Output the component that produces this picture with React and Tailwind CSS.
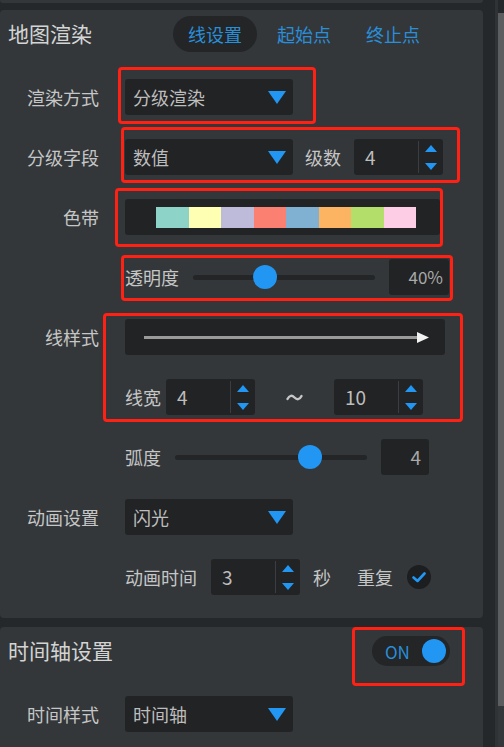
const font = { fontFamily: '"Noto Sans CJK SC", "Noto Sans", sans-serif' };

const Caret = () => (
  <svg width="18" height="13" viewBox="0 0 18 13">
    <polygon points="0,0 18,0 9,13" fill="#2196f3" />
  </svg>
);

const Select = ({ value }) => (
  <div className="w-[168px] h-[36px] bg-[#222325] rounded-[3px] flex items-center justify-between pl-[8px] pr-[7px]">
    <span className="text-[18px] text-[#bdbdbd] leading-none">{value}</span>
    <Caret />
  </div>
);

const NumberInput = ({ value }) => (
  <div className="w-[89px] h-[36px] bg-[#222325] rounded-[3px] flex">
    <div className="flex-1 flex items-center pl-[11px] text-[19px] text-[#bdbdbd]">{value}</div>
    <div className="w-px bg-[#3b3e41] my-[2px]" />
    <div className="w-[24px] flex flex-col items-center justify-between pt-[6px] pb-[5px]">
      <svg width="12" height="7" viewBox="0 0 12 7">
        <polygon points="0,7 12,7 6,0" fill="#2196f3" />
      </svg>
      <svg width="12" height="7" viewBox="0 0 12 7">
        <polygon points="0,0 12,0 6,7" fill="#2196f3" />
      </svg>
    </div>
  </div>
);

const Slider = ({ width, knob }) => (
  <div className="relative h-[5px] bg-[#232527] rounded-full" style={{ width }}>
    <div
      className="absolute top-1/2 w-[24px] h-[24px] -mt-[12px] -ml-[12px] rounded-full bg-[#2196f3]"
      style={{ left: knob }}
    />
  </div>
);

const Label = ({ children }) => (
  <div className="w-[99px] text-right text-[18px] text-[#c6c6c6] leading-none">{children}</div>
);

const RedBox = ({ className }) => (
  <div className={`absolute border-[3px] border-[#ff2114] rounded-[4px] pointer-events-none ${className}`} />
);

const colors = ['#8dd3c7', '#ffffb3', '#bebada', '#fb8072', '#80b1d3', '#fdb462', '#b3de69', '#fccde5'];

export default function App() {
  return (
    <div className="w-[504px] h-[747px] overflow-hidden bg-[#25282a] flex" style={font}>
      {/* panels */}
      <div className="w-[483px] flex flex-col">
        <div className="h-[3px] bg-[#33373a] rounded-b-[4px]" />

        {/* 地图渲染 */}
        <div className="relative mt-[7px] h-[608px] bg-[#33373a] rounded-[4px] pt-[6px]">
          <div className="flex items-center h-[36px]">
            <div className="w-[173px] pl-[8px] text-[21px] text-[#d4d4d4]">地图渲染</div>
            <div className="flex gap-[5px]">
              <div className="w-[84px] h-[36px] rounded-full bg-[#232527] flex items-center justify-center text-[18px] text-[#2a8ed8]">线设置</div>
              <div className="w-[84px] h-[36px] flex items-center justify-center text-[18px] text-[#2a8ed8]">起始点</div>
              <div className="w-[84px] h-[36px] flex items-center justify-center text-[18px] text-[#2a8ed8]">终止点</div>
            </div>
          </div>

          <div className="mt-[27px] flex flex-col gap-[24px]">
            <div className="flex items-center h-[36px] gap-[26px]">
              <Label>渲染方式</Label>
              <Select value="分级渲染" />
            </div>

            <div className="flex items-center h-[36px] gap-[26px]">
              <Label>分级字段</Label>
              <div className="flex items-center">
                <Select value="数值" />
                <span className="ml-[12px] mr-[13px] text-[18px] text-[#c6c6c6]">级数</span>
                <NumberInput value="4" />
              </div>
            </div>

            <div className="flex items-center h-[36px] gap-[26px]">
              <Label>色带</Label>
              <div className="w-[315px] h-[36px] bg-[#222325] rounded-[3px] flex items-center pl-[31px]">
                {colors.map((c) => (
                  <div key={c} className="w-[32.5px] h-[21px]" style={{ backgroundColor: c }} />
                ))}
              </div>
            </div>

            <div className="flex items-center h-[36px] pl-[125px]">
              <span className="text-[18px] text-[#c6c6c6] w-[68px]">透明度</span>
              <Slider width={182} knob={72} />
              <div className="ml-[14px] w-[60px] h-[36px] bg-[#222325] rounded-[3px] flex items-center justify-end pr-[6px] text-[17px] text-[#a9a9a9]">40%</div>
            </div>

            <div className="flex items-center h-[36px] gap-[26px]">
              <Label>线样式</Label>
              <div className="w-[320px] h-[36px] bg-[#222325] rounded-[3px] flex items-center pl-[19px]">
                <div className="w-[273px] h-[3px] bg-[#9a9a9a]" />
                <svg width="12" height="11" viewBox="0 0 12 11">
                  <polygon points="0,0 12,5.5 0,11" fill="#f2f2f2" />
                </svg>
              </div>
            </div>

            <div className="flex items-center h-[36px] pl-[125px]">
              <span className="text-[18px] text-[#c6c6c6] w-[41px]">线宽</span>
              <NumberInput value="4" />
              <div className="w-[79px] flex justify-center">
                <svg width="17" height="7" viewBox="0 0 17 7">
                  <path d="M1.5 5 C3.5 1 6 1 8.5 3.5 C11 6 13.5 6 15.5 2" fill="none" stroke="#c6c6c6" strokeWidth="2.4" strokeLinecap="round" />
                </svg>
              </div>
              <NumberInput value="10" />
            </div>

            <div className="flex items-center h-[36px] pl-[125px]">
              <span className="text-[18px] text-[#c6c6c6] w-[50px]">弧度</span>
              <Slider width={192} knob={135} />
              <div className="ml-[14px] w-[48px] h-[36px] bg-[#222325] rounded-[3px] flex items-center justify-end pr-[8px] text-[19px] text-[#a9a9a9]">4</div>
            </div>

            <div className="flex items-center h-[36px] gap-[26px]">
              <Label>动画设置</Label>
              <Select value="闪光" />
            </div>

            <div className="flex items-center h-[36px] pl-[125px]">
              <span className="text-[18px] text-[#c6c6c6] w-[86px]">动画时间</span>
              <NumberInput value="3" />
              <span className="ml-[13px] text-[18px] text-[#c6c6c6]">秒</span>
              <span className="ml-[26px] text-[18px] text-[#c6c6c6]">重复</span>
              <div className="ml-[14px] w-[24px] h-[24px] rounded-full bg-[#1c1e20] flex items-center justify-center">
                <svg width="14" height="11" viewBox="0 0 14 11">
                  <path d="M1.5 5.5 L5.5 9 L12.5 1.5" fill="none" stroke="#2196f3" strokeWidth="2.6" strokeLinecap="round" strokeLinejoin="round" />
                </svg>
              </div>
            </div>
          </div>

          <RedBox className="left-[118px] top-[57px] w-[198px] h-[57px]" />
          <RedBox className="left-[121px] top-[117px] w-[339px] h-[56px]" />
          <RedBox className="left-[115px] top-[178px] w-[328px] h-[59px]" />
          <RedBox className="left-[121px] top-[245px] w-[332px] h-[46px]" />
          <RedBox className="left-[103px] top-[303px] w-[360px] h-[109px]" />
        </div>

        {/* 时间轴设置 */}
        <div className="relative mt-[9px] flex-1 bg-[#33373a] rounded-t-[4px] pt-[9px]">
          <div className="flex items-center justify-between h-[30px] pr-[33px]">
            <div className="pl-[8px] text-[21px] text-[#d4d4d4]">时间轴设置</div>
            <div className="w-[78px] h-[30px] rounded-full bg-[#232527] flex items-center justify-between pl-[13px] pr-[4px]">
              <span className="text-[17px] text-[#2a8ed8] leading-none">ON</span>
              <div className="w-[24px] h-[24px] rounded-full bg-[#2196f3]" />
            </div>
          </div>
          <div className="mt-[30px] flex items-center h-[36px] gap-[26px]">
            <Label>时间样式</Label>
            <Select value="时间轴" />
          </div>
          <RedBox className="left-[352px] top-0 w-[113px] h-[59px]" />
        </div>
      </div>

      {/* scrollbar */}
      <div className="w-[12px]" />
      <div className="w-[3px] bg-[#2f3335]" />
      <div className="w-[6px] flex flex-col">
        <div className="h-[13px]" />
        <div className="h-[693px] bg-[#5b5d5f]" />
        <div className="flex-1 bg-[#33373a]" />
      </div>
    </div>
  );
}
